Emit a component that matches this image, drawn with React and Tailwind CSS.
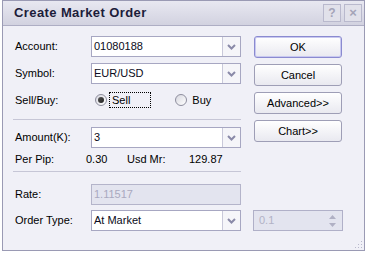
import React from 'react';

const font = { fontFamily: '"Liberation Sans", Arial, sans-serif' };

function Chevron() {
  return (
    <svg width="9" height="6" viewBox="0 0 9 6">
      <path d="M1 1 L4.5 4.5 L8 1" fill="none" stroke="#8a8aa8" strokeWidth="2" />
    </svg>
  );
}

function Combo({ value }) {
  return (
    <div className="flex h-[21px] w-[150px] border border-[#a7a7c2] bg-white">
      <div className="flex-1 pl-[2px] text-[11px] leading-[19px] text-[#0a0a20]">{value}</div>
      <div className="flex w-[18px] items-center justify-center border-l border-[#c9c9da] bg-[#f5f5f9]">
        <Chevron />
      </div>
    </div>
  );
}

function Row({ label, children, className = '' }) {
  return (
    <div className={`flex items-center ${className}`}>
      <div className="w-[78px] pl-[2px] text-[11px] text-black">{label}</div>
      {children}
    </div>
  );
}

function Btn({ children, def }) {
  return (
    <button
      className={`h-[22px] w-[88px] rounded-[3px] border bg-gradient-to-b from-white to-[#e9e9f0] text-[11px] text-black ${
        def ? 'border-[#8a8ad0] shadow-[inset_0_0_0_1px_#c9c9f0]' : 'border-[#9e9eb6]'
      }`}
    >
      {children}
    </button>
  );
}

function Radio({ checked }) {
  return (
    <span className="flex h-[12px] w-[12px] items-center justify-center rounded-full border border-[#8e8e9e] bg-gradient-to-br from-[#d8d8e0] to-white">
      {checked && <span className="h-[6px] w-[6px] rounded-full bg-gradient-to-br from-[#555] to-[#222]" />}
    </span>
  );
}

export default function App() {
  return (
    <div className="h-[255px] w-[368px] overflow-hidden bg-white" style={font}>
      <div className="ml-[2px] flex h-[251px] w-[363px] flex-col border border-[#9a9ab4]">
        {/* title bar */}
        <div className="flex h-[25px] items-center border-b border-[#aeaec4] bg-gradient-to-b from-[#e8e8f1] to-[#d2d2e0] pl-[11px] pr-[2px]">
          <span className="flex-1 text-[13px] font-bold tracking-[0.4px] text-[#1c1c3a]">Create Market Order</span>
          <div className="flex gap-[3px]">
            <span className="flex h-[18px] w-[18px] items-center justify-center border border-[#b9b9cd] bg-[#e1e1ea] text-[12px] font-bold text-[#a4a4b8]">?</span>
            <span className="flex h-[18px] w-[18px] items-center justify-center border border-[#b9b9cd] bg-[#e1e1ea] text-[13px] font-bold text-[#a4a4b8]">×</span>
          </div>
        </div>

        {/* body */}
        <div className="relative flex flex-1 bg-[#f0f0f7] pl-[10px] pt-[10px]">
          <div className="w-[228px]">
            <Row label="Account:">
              <Combo value="01080188" />
            </Row>
            <Row label="Symbol:" className="mt-[6px]">
              <Combo value="EUR/USD" />
            </Row>
            <Row label="Sell/Buy:" className="mt-[8px] h-[16px]">
              <div className="flex items-center pl-[4px]">
                <Radio checked />
                <span className="ml-[2px] border border-dotted border-black px-[2px] pr-[20px] text-[11px] leading-[14px]">Sell</span>
              </div>
              <div className="ml-[24px] flex items-center gap-[5px]">
                <Radio />
                <span className="text-[11px]">Buy</span>
              </div>
            </Row>
            <div className="mt-[11px] h-px w-[228px] bg-[#c6c6d6]" />
            <Row label="Amount(K):" className="mt-[7px]">
              <Combo value="3" />
            </Row>
            <div className="mt-[3px] flex h-[16px] items-center pl-[2px] text-[11px] text-black">
              <span className="w-[71px]">Per Pip:</span>
              <span className="w-[41px]">0.30</span>
              <span className="w-[62px]">Usd Mr:</span>
              <span>129.87</span>
            </div>
            <div className="mt-[4px] h-px w-[228px] bg-[#c6c6d6]" />
            <Row label="Rate:" className="mt-[12px]">
              <div className="h-[21px] w-[150px] border border-[#b4b4ca] bg-[#e3e4ef] pl-[2px] text-[11px] leading-[19px] text-[#a9a9bf]">1.11517</div>
            </Row>
            <Row label="Order Type:" className="mt-[5px]">
              <Combo value="At Market" />
            </Row>
          </div>

          <div className="ml-[12px] flex flex-col">
            <div className="ml-[1px] flex flex-col gap-[6px]">
              <Btn def>OK</Btn>
              <Btn>Cancel</Btn>
              <Btn>Advanced&gt;&gt;</Btn>
              <Btn>Chart&gt;&gt;</Btn>
            </div>
            <div className="mt-[68px] flex h-[21px] w-[90px] items-center border border-[#b0b0c8] bg-[#e3e4ef] pl-[5px] pr-[6px]">
              <span className="flex-1 text-[11px] text-[#b2b2c6]">0.1</span>
              <div className="flex flex-col gap-[4px]">
                <svg width="7" height="4" viewBox="0 0 7 4"><path d="M0 4 L3.5 0 L7 4 Z" fill="#b0b0c4" /></svg>
                <svg width="7" height="4" viewBox="0 0 7 4"><path d="M0 0 L3.5 4 L7 0 Z" fill="#b0b0c4" /></svg>
              </div>
            </div>
          </div>

          {/* resize grip */}
          <svg className="absolute bottom-[1px] right-[1px]" width="8" height="8" viewBox="0 0 8 8">
            <rect x="6" y="0" width="1" height="1" fill="#b8b8cc" />
            <rect x="3" y="3" width="1" height="1" fill="#b8b8cc" />
            <rect x="6" y="3" width="1" height="1" fill="#b8b8cc" />
            <rect x="0" y="6" width="1" height="1" fill="#b8b8cc" />
            <rect x="3" y="6" width="1" height="1" fill="#b8b8cc" />
            <rect x="6" y="6" width="1" height="1" fill="#b8b8cc" />
          </svg>
        </div>
      </div>
    </div>
  );
}
